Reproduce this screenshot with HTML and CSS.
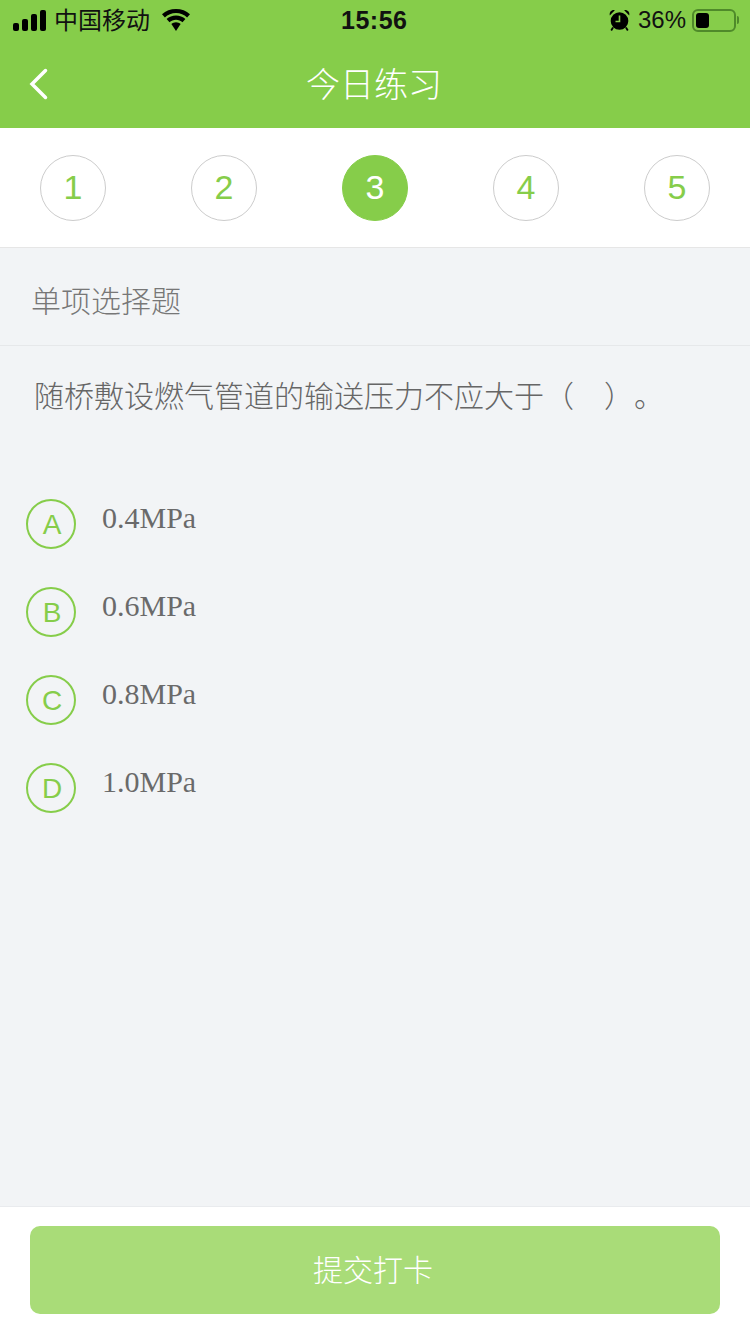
FILE: index.html
```html
<!DOCTYPE html>
<html lang="zh-CN">
<head>
<meta charset="UTF-8">
<meta name="viewport" content="width=device-width, initial-scale=1.0">
<title>今日练习</title>
<link rel="stylesheet" href="styles.css">
</head>
<body>
    <header class="top">
        <div class="status">
            <div class="status-left">
                <svg class="signal" width="33" height="21" viewBox="0 0 33 21">
                    <rect x="0" y="13" width="6" height="8" rx="2"/>
                    <rect x="9" y="9" width="6" height="12" rx="2"/>
                    <rect x="18" y="4" width="6" height="17" rx="2"/>
                    <rect x="27" y="0" width="6" height="21" rx="2"/>
                </svg>
                <span class="carrier">中国移动</span>
                <svg class="wifi" width="30" height="22" viewBox="0 0 30 22">
                    <path d="M15 4c4.300 0 8.200 1.700 11.100 4.400L29 5.300C25.300 1.900 20.400 0 15 0S4.700 1.900 1 5.300l2.900 3.100C6.800 5.700 10.700 4 15 4z"/>
                    <path d="M15 10.700c2.500 0 4.800 1 6.500 2.500l2.900-3.100C21.900 7.800 18.600 6.500 15 6.500S8.100 7.800 5.600 10.100l2.900 3.100c1.700-1.500 4-2.500 6.500-2.500z"/>
                    <path d="M15 13.200c-1.800 0-3.400.7-4.600 1.800L15 22l4.600-7c-1.200-1.100-2.800-1.800-4.600-1.800z"/>
                </svg>
            </div>
            <span class="clock">15:56</span>
            <div class="status-right">
                <svg class="alarm" width="21" height="22" viewBox="0 0 21 22">
                    <circle cx="10.500" cy="12" r="8.800"/>
                    <path d="M.8 6.500C0 3.300 2.500.6 5.800 1.200z"/>
                    <path d="M20.200 6.500c.8-3.200-1.700-5.900-5-5.300z"/>
                    <path d="M4 18.500 2.200 21.500M17 18.500l1.800 3" stroke="#000" stroke-width="1.800"/>
                    <path d="M10.500 6.500v6H6.500" fill="none" stroke="#86cd4a" stroke-width="1.600"/>
                </svg>
                <span class="percent">36%</span>
                <div class="battery">
                    <div class="battery-level"></div>
                </div>
                <div class="battery-tip"></div>
            </div>
        </div>
        <nav class="nav">
            <svg class="back" width="20" height="32" viewBox="0 0 20 32">
                <path d="M16.500 2.500 3 16l13.500 13.500" fill="none" stroke="#fff" stroke-width="3.500" stroke-linecap="round"/>
            </svg>
            <h1 class="nav-title">今日练习</h1>
        </nav>
    </header>

    <div class="steps">
        <div class="step">1</div>
        <div class="step">2</div>
        <div class="step step-current">3</div>
        <div class="step">4</div>
        <div class="step">5</div>
    </div>

    <main class="content">
        <div class="type">单项选择题</div>
        <p class="question">随桥敷设燃气管道的输送压力不应大于（&ensp;&ensp;）。</p>
        <ul class="options">
            <li class="option"><span class="letter">A</span><span class="answer">0.4MPa</span></li>
            <li class="option"><span class="letter">B</span><span class="answer">0.6MPa</span></li>
            <li class="option"><span class="letter">C</span><span class="answer">0.8MPa</span></li>
            <li class="option"><span class="letter">D</span><span class="answer">1.0MPa</span></li>
        </ul>
    </main>

    <footer class="bottom">
        <button class="submit" type="button">提交打卡</button>
    </footer>
</body>
</html>
```

FILE: styles.css
```css
/* Page */
* {
    box-sizing: border-box;
}

body {
    margin: 0;
    width: 750px;
    height: 1334px;
    display: flex;
    flex-direction: column;
    overflow: hidden;
    background-color: #f2f4f6;
    font-family: "Liberation Sans", "Noto Sans CJK SC", sans-serif;
    color: #666;
}

/* Green header */
.top {
    height: 128px;
    background-color: #86cd4a;
}

.status {
    height: 40px;
    padding: 0 11px 0 13px;
    display: flex;
    align-items: center;
    justify-content: space-between;
    color: #111;
    position: relative;
}

.status-left,
.status-right {
    display: flex;
    align-items: center;
}

.carrier {
    margin-left: 8px;
    margin-bottom: 4px;
    font-size: 24px;
}

.wifi {
    margin-left: 11px;
}

.clock {
    position: absolute;
    left: 341px;
    font-size: 25px;
    font-weight: bold;
    letter-spacing: 0.5px;
}

.percent {
    margin-left: 8px;
    margin-right: 6px;
    font-size: 24px;
}

.battery {
    width: 44px;
    height: 23px;
    padding: 2px;
    border: 2px solid #4f8a2a;
    border-radius: 6px;
}

.battery-level {
    width: 13px;
    height: 100%;
    background-color: #000;
    border-radius: 3px;
}

.battery-tip {
    width: 2px;
    height: 8px;
    margin-left: 1px;
    background-color: #4f8a2a;
    border-radius: 0 2px 2px 0;
}

.nav {
    height: 88px;
    padding: 0 2px 4px 0;
    display: flex;
    align-items: center;
    justify-content: center;
    position: relative;
}

.back {
    position: absolute;
    left: 29px;
    top: 28px;
}

.nav-title {
    margin: 0;
    font-size: 34px;
    font-weight: 300;
    color: #fff;
}

/* Question numbers */
.steps {
    height: 120px;
    padding: 0 40px;
    display: flex;
    align-items: center;
    justify-content: space-between;
    background-color: #fff;
    border-bottom: 1px solid #e6e6e6;
}

.step {
    width: 66px;
    height: 66px;
    display: flex;
    align-items: center;
    justify-content: center;
    border: 1px solid #ccc;
    border-radius: 50%;
    font-size: 34px;
    color: #86cd4a;
}

.step-current {
    border-color: #86cd4a;
    background-color: #86cd4a;
    color: #fff;
}

/* Question */
.content {
    flex: 1;
}

.type {
    height: 98px;
    padding: 4px 0 0 31px;
    display: flex;
    align-items: center;
    border-bottom: 1px solid #e6e8ea;
    font-size: 30px;
    font-weight: 300;
    color: #777;
}

.question {
    margin: 0;
    padding: 29px 34px 0;
    height: 153px;
    font-size: 30px;
    line-height: 44px;
    font-weight: 300;
    color: #666;
    text-spacing-trim: space-all;
}

.options {
    margin: 0;
    padding: 0 0 0 26px;
    list-style: none;
}

.option {
    height: 88px;
    display: flex;
    align-items: flex-start;
}

.letter {
    width: 50px;
    height: 50px;
    padding: 2px 0 0 2px;
    display: flex;
    align-items: center;
    justify-content: center;
    border: 2px solid #86cd4a;
    border-radius: 50%;
    font-size: 28px;
    color: #86cd4a;
}

.answer {
    margin-left: 26px;
    line-height: 38px;
    font-family: "Liberation Serif", serif;
    font-size: 30px;
    color: #6a6a6a;
}

/* Submit bar */
.bottom {
    height: 128px;
    padding: 19px 30px 0;
    background-color: #fff;
    border-top: 1px solid #e9ebee;
}

.submit {
    width: 100%;
    height: 88px;
    padding: 0 4px 4px 0;
    border: none;
    border-radius: 10px;
    background-color: #a9dc78;
    font-family: "Noto Sans CJK SC", sans-serif;
    font-size: 30px;
    font-weight: 300;
    color: #fff;
}
```
